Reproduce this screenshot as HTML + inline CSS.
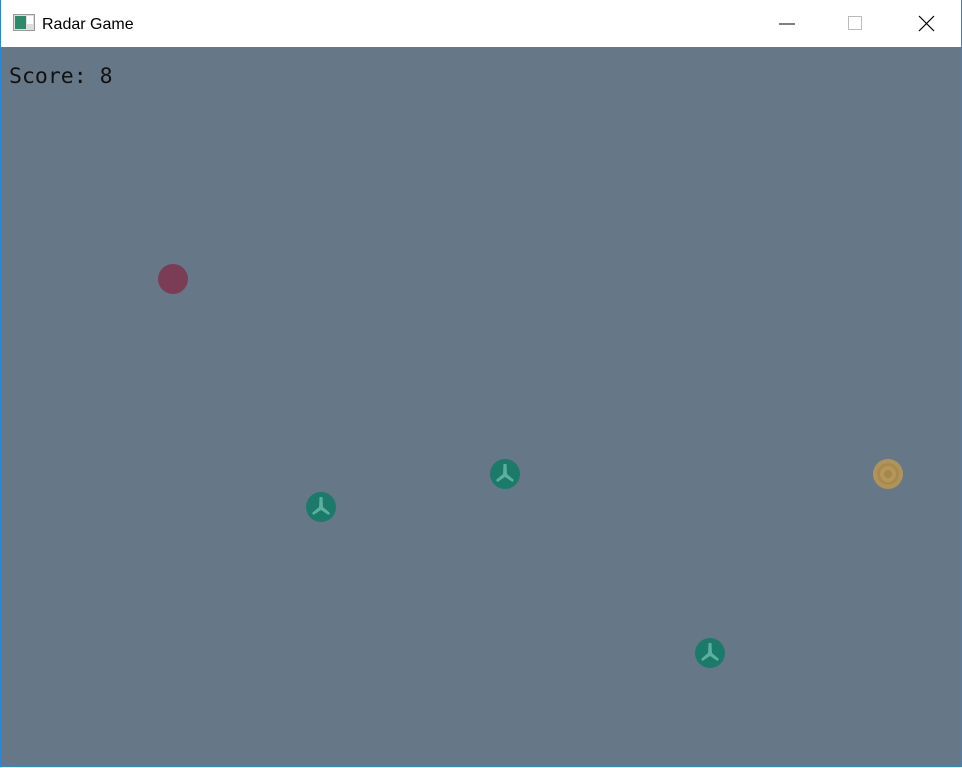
<!DOCTYPE html>
<html><head><meta charset="utf-8"><style>
html,body{margin:0;padding:0;width:962px;height:768px;overflow:hidden;background:#fff;font-family:"Liberation Sans",sans-serif}
.win{position:absolute;left:0;top:0;width:960px;height:766px;border:1px solid #2b88d8;border-top:none;}
.title{position:absolute;left:0;top:0;width:962px;height:47px;background:#fff}
.title .t{position:absolute;left:42px;top:16px;font-size:16px;color:#000}
.canvas{position:absolute;left:1px;top:47px;width:960px;height:720px;background:#667788}
.score{position:absolute;left:9px;top:64px;font-family:"DejaVu Sans Mono","Liberation Mono",monospace;font-size:21.5px;color:#111}
</style></head><body>
<div class="title">
<svg style="position:absolute;left:13px;top:14px" width="22" height="18"><rect x="0.5" y="0.5" width="21" height="16" fill="#ddd" stroke="#999"/><rect x="2" y="2" width="11" height="13" fill="#2a8a6a"/><rect x="14" y="2" width="6" height="8" fill="#fff"/></svg>
<div class="t">Radar Game</div>
<svg style="position:absolute;left:770px;top:10px" width="180" height="28">
<line x1="9" y1="14" x2="25" y2="14" stroke="#000" stroke-width="1"/>
<rect x="78.5" y="6.5" width="13" height="13" fill="none" stroke="#bbb"/>
<line x1="149" y1="6" x2="164" y2="21" stroke="#000" stroke-width="1.2"/><line x1="164" y1="6" x2="149" y2="21" stroke="#000" stroke-width="1.2"/>
</svg>
</div>
<div class="canvas"></div>
<div class="win"></div>
<div class="score">Score: 8</div>
<svg style="position:absolute;left:0;top:0" width="962" height="768">
<defs><g id="e"><circle r="15" fill="#1c7a6a"/><path d="M-1.5,-10 L1.5,-10 L2,0 L9,6 L7.5,8 L0,3 L-7.5,8 L-9,6 L-2,0 Z" fill="#5cae9e"/></g></defs>
<circle cx="173" cy="279" r="15" fill="#7a3d55"/>
<use href="#e" x="505" y="474"/>
<use href="#e" x="321" y="507"/>
<use href="#e" x="710" y="653"/>
<circle cx="888" cy="474" r="15" fill="#b0935a"/>
<circle cx="888" cy="474" r="11" fill="#a68a50"/>
<circle cx="888" cy="474" r="8" fill="#b8965a"/>
<circle cx="888" cy="474" r="4" fill="#a08850"/>
</svg>
</body></html>
